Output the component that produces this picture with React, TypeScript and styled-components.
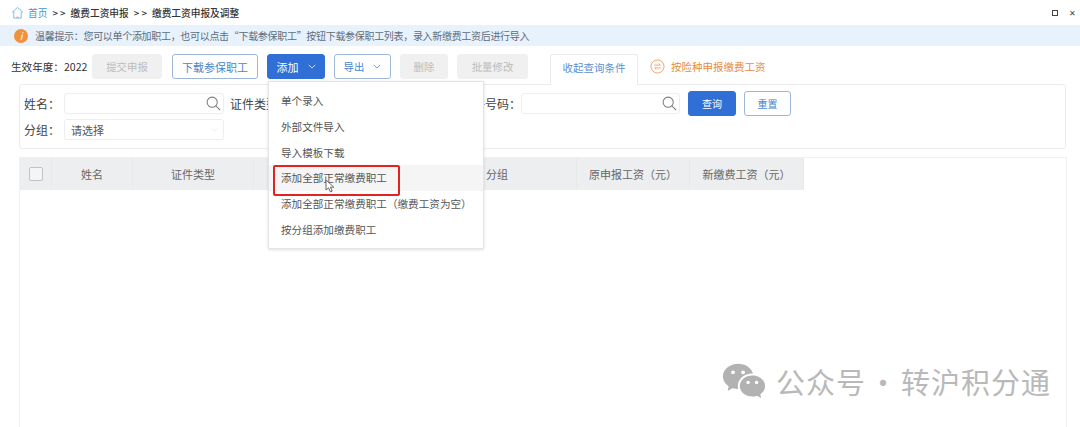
import { createGlobalStyle } from 'styled-components';
import styled from 'styled-components';
import { RiWechatFill } from 'react-icons/ri';

const GlobalStyle = createGlobalStyle`
  html, body {
    margin: 0;
    padding: 0;
    background: #fff;
  }
  body {
    font-family: "Noto Sans CJK SC", "Liberation Sans", sans-serif;
    color: #444;
  }
`;

const menuItems = ['单个录入', '外部文件导入', '导入模板下载', '添加全部正常缴费职工', '添加全部正常缴费职工（缴费工资为空）', '按分组添加缴费职工'];
// the third title sits behind the open menu
const columns = [
  { title: '姓名', width: 81 },
  { title: '证件类型', width: 121 },
  { title: '', width: 226 },
  { title: '分组', width: 97, left: true },
  { title: '原申报工资（元）', width: 113 },
  { title: '新缴费工资（元）', width: 114 },
];

function App() {
  return (
    <Page>
      <GlobalStyle />
      <Breadcrumb>
        <HomeIcon viewBox="0 0 14 14">
          <path d="M1 7 L7 1.5 L13 7 M3 6 V13 H11 V6 M5.5 13 Q7 10 8.5 13" />
        </HomeIcon>
        <HomeLink>首页</HomeLink>
        <Crumb>&gt; &gt;</Crumb>
        <Crumb>缴费工资申报</Crumb>
        <Crumb>&gt; &gt;</Crumb>
        <Crumb>缴费工资申报及调整</Crumb>
        <WindowActions>
          <MaxIcon />
          <CloseIcon>✕</CloseIcon>
        </WindowActions>
      </Breadcrumb>

      <TipBar>
        <TipIcon>i</TipIcon>
        <TipText>温馨提示：您可以单个添加职工，也可以点击“下载参保职工”按钮下载参保职工列表，录入新缴费工资后进行导入</TipText>
      </TipBar>

      <Toolbar>
        <YearLabel>生效年度：2022</YearLabel>
        <Button $variant="disabled" $width={70} $size={10.4}>提交申报</Button>
        <Button $variant="outline" $width={86} $left={1}>下载参保职工</Button>
        <MenuAnchor>
          <Button $variant="primary" $width={58}>
            添加 <Chevron viewBox="0 0 10 6"><path d="M1 1 L5 5 L9 1" /></Chevron>
          </Button>
          <Menu>
            {menuItems.map((item, index) => (
              <MenuItem key={item} $active={index === 3}>
                {item}
                {index === 3 && <Highlight />}
                {index === 3 && (
                  <Cursor viewBox="0 0 11 14">
                    <path d="M1 1 V11 L3.6 8.8 L5.4 13 L7.2 12.2 L5.4 8.2 H8.8 Z" />
                  </Cursor>
                )}
              </MenuItem>
            ))}
          </Menu>
        </MenuAnchor>
        <Button $variant="outline" $width={57} $size={10.4}>
          导出 <Chevron viewBox="0 0 10 6"><path d="M1 1 L5 5 L9 1" /></Chevron>
        </Button>
        <Button $variant="disabled" $width={48} $size={10.4}>删除</Button>
        <Button $variant="disabled" $width={71} $size={10.4}>批量修改</Button>
        <Tab>收起查询条件</Tab>
        <SwitchLink>
          <SwitchIcon viewBox="0 0 16 16">
            <circle cx="8" cy="8" r="7" />
            <path d="M4.5 6.5 H11 L9.2 4.8 M11.5 9.5 H5 L6.8 11.2" />
          </SwitchIcon>
          按险种申报缴费工资
        </SwitchLink>
      </Toolbar>

      <SearchPanel>
        <SearchRow>
          <FieldLabel>姓名：</FieldLabel>
          <SearchInput $width={160}>
            <SearchIcon viewBox="0 0 16 16"><circle cx="6.6" cy="6.6" r="5.4" /><path d="M10.6 10.6 L15 15" /></SearchIcon>
          </SearchInput>
          <FieldLabel $gap={6}>证件类型：</FieldLabel>
          <SearchInput $width={159} />
          <FieldLabel $gap={12}>证件号码：</FieldLabel>
          <SearchInput $width={159}>
            <SearchIcon viewBox="0 0 16 16"><circle cx="6.6" cy="6.6" r="5.4" /><path d="M10.6 10.6 L15 15" /></SearchIcon>
          </SearchInput>
          <Button $variant="primary" $width={48} $left={8} $size={10}>查询</Button>
          <Button $variant="outline" $width={47} $left={8} $size={10}>重置</Button>
        </SearchRow>
        <SearchRow>
          <FieldLabel>分组：</FieldLabel>
          <SelectBox>
            请选择
            <SelectArrow viewBox="0 0 10 6"><path d="M1 1 L5 5 L9 1" /></SelectArrow>
          </SelectBox>
        </SearchRow>
      </SearchPanel>

      <TablePanel>
        <TableHead>
          <CheckCell><Checkbox /></CheckCell>
          {columns.map((col, index) => (
            <HeadCell key={index} $width={col.width} $left={col.left}>{col.title}</HeadCell>
          ))}
        </TableHead>
      </TablePanel>

      <Watermark>
        <RiWechatFill size={46} />
        <WatermarkText>公众号<WatermarkDot>·</WatermarkDot>转沪积分通</WatermarkText>
      </Watermark>
    </Page>
  );
}

export default App;

const Page = styled.div`
  position: relative;
  width: 1080px;
  height: 427px;
  overflow: hidden;
  background: #fff;
`;

const Breadcrumb = styled.div`
  display: flex;
  align-items: center;
  gap: 5px;
  height: 25px;
  padding: 0 4px 0 11px;
  font-size: 9.7px;
`;

const HomeIcon = styled.svg`
  width: 13px;
  height: 13px;
  fill: none;
  stroke: #7fb6d6;
  stroke-width: 1;
`;

const HomeLink = styled.span`
  margin-left: -1px;
  color: #3d9ad1;
`;

const Crumb = styled.span`
  color: #333;
  font-weight: 500;
`;

const WindowActions = styled.div`
  display: flex;
  align-items: center;
  gap: 11px;
  margin-left: auto;
`;

const MaxIcon = styled.span`
  width: 4px;
  height: 4px;
  border: 1px solid #444;
`;

const CloseIcon = styled.span`
  font-size: 8px;
  color: #444;
`;

const TipBar = styled.div`
  display: flex;
  align-items: center;
  gap: 7px;
  height: 21px;
  padding-left: 14px;
  background: #e7f2fd;
`;

const TipIcon = styled.span`
  display: flex;
  align-items: center;
  justify-content: center;
  width: 14px;
  height: 14px;
  border-radius: 50%;
  background: #f0913c;
  color: #fff;
  font-size: 10px;
  font-style: italic;
`;

const TipText = styled.span`
  font-size: 10px;
  letter-spacing: -0.31px;
  color: #5f6b78;
  white-space: nowrap;
`;

const Toolbar = styled.div`
  display: flex;
  align-items: flex-start;
  gap: 9px;
  height: 30px;
  margin-top: 8px;
  padding-left: 11px;
`;

const YearLabel = styled.span`
  width: 72px;
  line-height: 25px;
  font-size: 10.6px;
  color: #333;
  white-space: nowrap;
`;

const Button = styled.div<{ $variant: 'primary' | 'outline' | 'disabled'; $width: number; $left?: number; $size?: number }>`
  display: flex;
  align-items: center;
  justify-content: center;
  gap: 9px;
  box-sizing: border-box;
  flex: none;
  width: ${(props) => props.$width}px;
  height: 25px;
  margin-left: ${(props) => props.$left || 0}px;
  border-radius: 3px;
  font-size: ${(props) => props.$size || 11}px;
  border: 1px solid ${(props) => (props.$variant === 'primary' ? '#2f6fd6' : props.$variant === 'outline' ? '#9db8d6' : '#f0f0f0')};
  background: ${(props) => (props.$variant === 'primary' ? '#2f6fd6' : props.$variant === 'outline' ? '#fff' : '#f0f0f0')};
  color: ${(props) => (props.$variant === 'primary' ? '#fff' : props.$variant === 'outline' ? '#4a86c9' : '#bcbcbc')};
`;

const Chevron = styled.svg`
  width: 8px;
  height: 5px;
  fill: none;
  stroke: currentColor;
  stroke-width: 1;
`;

const MenuAnchor = styled.div`
  position: relative;
  flex: none;
`;

const Menu = styled.div`
  position: absolute;
  z-index: 5;
  top: 27px;
  left: 1px;
  box-sizing: border-box;
  width: 216px;
  height: 168px;
  padding-top: 6px;
  background: #fff;
  border: 1px solid #e4e4e4;
  box-shadow: 0 1px 3px rgba(0, 0, 0, 0.12);
`;

const MenuItem = styled.div<{ $active?: boolean }>`
  position: relative;
  height: 25.8px;
  line-height: 25.4px;
  padding-left: 12px;
  font-size: 10.6px;
  color: #555;
  white-space: nowrap;
  background: ${(props) => (props.$active ? '#f5f5f5' : 'transparent')};
`;

const Highlight = styled.span`
  position: absolute;
  top: 0;
  left: 4px;
  width: 127px;
  height: 31px;
  box-sizing: border-box;
  border: 2.5px solid #e2231f;
  border-radius: 2px;
`;

const Cursor = styled.svg`
  position: absolute;
  top: 14px;
  left: 56px;
  width: 11px;
  height: 14px;
  fill: #fff;
  stroke: #666;
  stroke-width: 1;
`;

const Tab = styled.div`
  position: relative;
  z-index: 1;
  flex: none;
  box-sizing: border-box;
  width: 88px;
  height: 31px;
  margin-left: 13px;
  line-height: 26px;
  text-align: center;
  font-size: 10.5px;
  color: #5d8fd0;
  background: #fff;
  border: 1px solid #eaeaea;
  border-bottom: none;
  border-radius: 3px 3px 0 0;
`;

const SwitchLink = styled.div`
  display: flex;
  align-items: center;
  gap: 6px;
  height: 25px;
  margin-left: 3px;
  font-size: 10.5px;
  color: #e88a3a;
  white-space: nowrap;
`;

const SwitchIcon = styled.svg`
  width: 15px;
  height: 15px;
  fill: none;
  stroke: #e9a36a;
  stroke-width: 1;
`;

const SearchPanel = styled.div`
  display: flex;
  flex-direction: column;
  gap: 3px;
  box-sizing: border-box;
  width: 1047px;
  height: 65px;
  margin-left: 19px;
  padding: 6px 0 0 4px;
  border: 1px solid #ececec;
  border-radius: 3px;
`;

const SearchRow = styled.div`
  display: flex;
  align-items: center;
`;

const FieldLabel = styled.span<{ $gap?: number }>`
  width: ${(props) => (props.$gap ? 'auto' : '40px')};
  margin-left: ${(props) => props.$gap || 0}px;
  font-size: 12px;
  color: #444;
  white-space: nowrap;
`;

const SearchInput = styled.div<{ $width: number }>`
  position: relative;
  box-sizing: border-box;
  width: ${(props) => props.$width}px;
  height: 21px;
  border: 1px solid #eeeeee;
  border-radius: 3px;
`;

const SearchIcon = styled.svg`
  position: absolute;
  top: 2px;
  right: 2px;
  width: 15px;
  height: 15px;
  fill: none;
  stroke: #7c7c7c;
  stroke-width: 1.1;
`;

const SelectBox = styled.div`
  display: flex;
  align-items: center;
  justify-content: space-between;
  box-sizing: border-box;
  width: 160px;
  height: 21px;
  padding: 0 5px 0 6px;
  font-size: 11px;
  color: #555;
  border: 1px solid #eeeeee;
  border-radius: 3px;
`;

const SelectArrow = styled.svg`
  width: 7px;
  height: 4px;
  fill: none;
  stroke: #e2e2e2;
  stroke-width: 1;
`;

const TablePanel = styled.div`
  box-sizing: border-box;
  width: 1048px;
  height: 280px;
  margin: 8px 0 0 19px;
  border: 1px solid #f0f0f0;
  border-bottom: none;
`;

const TableHead = styled.div`
  display: flex;
  height: 32px;
  width: 784px;
  background: #eceef0;
`;

const CheckCell = styled.div`
  display: flex;
  align-items: center;
  justify-content: center;
  width: 32px;
  flex: none;
  border-right: 1px solid #e6e8ea;
  box-sizing: border-box;
`;

const Checkbox = styled.span`
  width: 12px;
  height: 12px;
  border: 1px solid #bfc3c7;
  border-radius: 2px;
  background: #f4f5f6;
`;

const HeadCell = styled.div<{ $width: number; $left?: boolean }>`
  box-sizing: border-box;
  flex: none;
  width: ${(props) => props.$width}px;
  line-height: 32px;
  font-size: 11px;
  color: #666;
  text-align: ${(props) => (props.$left ? 'left' : 'center')};
  border-right: 1px solid #e6e8ea;
  padding-left: ${(props) => (props.$left ? '6px' : '0')};
  white-space: nowrap;
`;

const Watermark = styled.div`
  position: absolute;
  right: 29px;
  bottom: 23px;
  display: flex;
  align-items: center;
  gap: 9px;
  color: #b2b2b2;
`;

const WatermarkText = styled.span`
  font-size: 29px;
  letter-spacing: 1px;
  white-space: nowrap;
  color: #b9b9b9;
`;

const WatermarkDot = styled.span`
  display: inline-block;
  width: 35px;
  text-align: center;
`;
